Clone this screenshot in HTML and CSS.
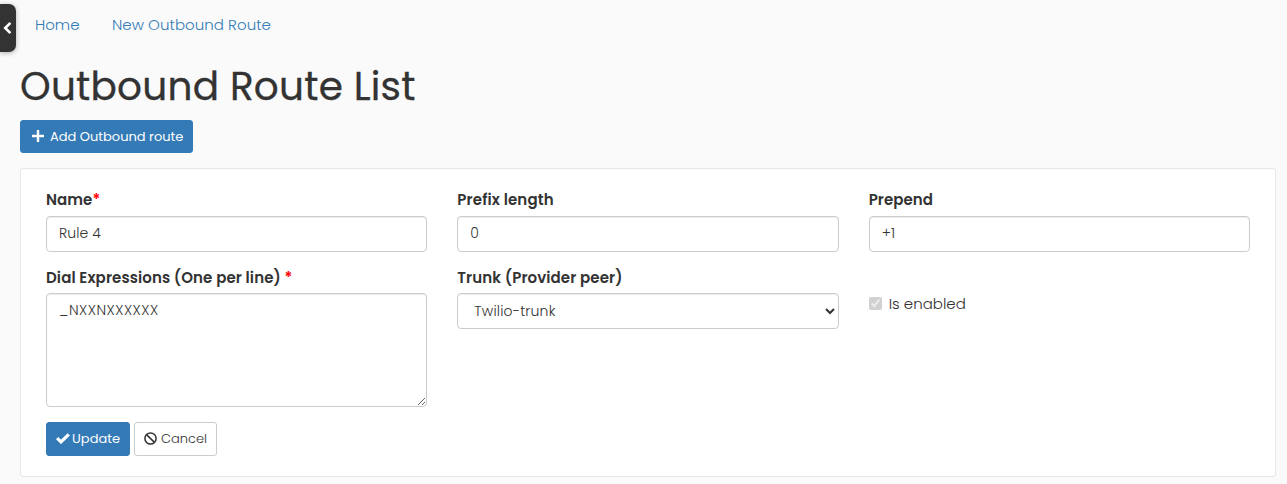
FILE: index.html
```html
<!DOCTYPE html>
<html lang="en">
<head>
<meta charset="utf-8">
<title>Outbound Route List</title>
<link rel="stylesheet" href="styles.css">
</head>
<body>
<button class="toggle" aria-label="Collapse"><svg width="9" height="14" viewBox="0 0 9 14"><path d="M7.4 1.8 2.2 7l5.2 5.2" fill="none" stroke="#fff" stroke-width="2.6"/></svg></button>
<nav class="nav"><a class="nav-home">Home</a><a class="nav-new">New Outbound Route</a></nav>
<main class="page">
  <h1 class="title">Outbound Route List</h1>
  <button class="btn btn-primary btn-add"><svg width="12" height="12" viewBox="0 0 12 12"><path d="M6 0v12M0 6h12" stroke="#fff" stroke-width="2.4"/></svg><span>Add Outbound route</span></button>
  <form class="card">
    <div class="grid">
      <div class="field">
        <label class="label">Name<b class="req">*</b></label>
        <input class="control" value="Rule 4">
      </div>
      <div class="field">
        <label class="label label-wide">Prefix length</label>
        <input class="control" value="0">
      </div>
      <div class="field">
        <label class="label">Prepend</label>
        <input class="control" value="+1">
      </div>
      <div class="field">
        <label class="label label-low label-wide">Dial Expressions (One per line) <b class="req">*</b></label>
        <textarea class="control area">_NXXNXXXXXX</textarea>
      </div>
      <div class="field">
        <label class="label label-low label-wide">Trunk (Provider peer)</label>
        <select class="control select"><option>Twilio-trunk</option></select>
      </div>
      <label class="check"><input type="checkbox" checked disabled><span>Is enabled</span></label>
    </div>
    <div class="actions">
      <button type="button" class="btn btn-primary btn-update"><svg width="14" height="11" viewBox="0 0 14 11"><path d="M1.1 5.2 5 8.9 12.8 1.3" fill="none" stroke="#fff" stroke-width="3.2"/></svg><span>Update</span></button>
      <button type="button" class="btn btn-default btn-cancel"><svg width="13" height="13" viewBox="0 0 13 13"><g fill="none" stroke="#333" stroke-width="1.5"><circle cx="6.5" cy="6.5" r="5.6"/><path d="m2.6 2.6 7.8 7.8"/></g></svg><span>Cancel</span></button>
    </div>
  </form>
</main>
</body>
</html>
```
FILE: styles.css
```css
* { box-sizing: border-box; }
body { margin: 0; height: 484px; overflow: hidden; background: #fafafa; color: #333; font: 300 15px/20px Poppins, Inter, "Open Sans", sans-serif; }
.toggle { position: absolute; left: 0; top: 4px; width: 16px; height: 48px; padding: 0 0 0 3px; border: 0; border-radius: 0 7px 7px 0; background: #333; box-shadow: 0 1px 5px rgba(0,0,0,.3); display: flex; align-items: center; }
.nav { height: 50px; padding: 15px 35px 0; display: flex; gap: 32px; color: #337ab7; white-space: nowrap; }
.nav-home { width: 45px; }
.nav-new { letter-spacing: .04px; }
.page { padding: 10px 11px 0 20px; }
.title { margin: 0 0 7px; font-size: 39px; line-height: 53px; font-weight: 400; letter-spacing: .23px; white-space: nowrap; -webkit-text-stroke: .3px #333; }
.btn { display: inline-flex; align-items: center; border: 1px solid #337ab7; border-radius: 3px; font: 400 13px/20px Poppins, Inter, "Open Sans", sans-serif; white-space: nowrap; }
.btn svg { flex: none; }
.btn-primary { background: #337ab7; color: #fff; }
.btn-default { background: #fff; color: #333; border-color: #ccc; }
.btn-add { display: flex; width: 173px; height: 33px; padding: 0 0 0 11px; gap: 6px; }
.btn-add svg { margin-top: -1px; }
.card { margin-top: 15px; height: 309px; padding: 21px 25px 0; background: #fff; border: 1px solid #e7e7e7; border-radius: 3px; }
.grid { display: grid; grid-template-columns: repeat(3, 1fr); grid-template-rows: 62px 140px; column-gap: 30px; row-gap: 15px; }
.label { display: block; height: 26px; line-height: 20px; font-weight: 600; letter-spacing: .06px; white-space: nowrap; }
.label-wide { letter-spacing: .13px; }
.label-low { padding-top: 1px; }
.label-low.label-wide { letter-spacing: .1px; }
.req { color: #f00; font-weight: 600; }
.control { display: block; width: 100%; height: 36px; padding: 5px 12px 7px; border: 1px solid #ccc; border-radius: 4px; background: #fff; color: #333; box-shadow: inset 0 1px 1px rgba(0,0,0,.075); font: 300 14px/20px Poppins, Inter, "Open Sans", sans-serif; letter-spacing: .1px; }
.area { height: 114px; padding-top: 6px; resize: vertical; letter-spacing: .5px; }
.select { margin: 0; padding: 6px 12px; letter-spacing: .18px; }
.check { display: flex; align-items: center; height: 20px; margin-top: 27px; gap: 7px; }
.check input { position: relative; top: -1px; width: 13px; height: 13px; margin: 0; }
.actions { display: flex; gap: 4px; margin-top: 15px; }
.btn-update, .btn-cancel { height: 34px; padding: 0 9px 1px; }
.btn-update { width: 84px; gap: 2px; letter-spacing: .05px; }
.btn-cancel { width: 83px; gap: 4px; font-weight: 300; }
```
